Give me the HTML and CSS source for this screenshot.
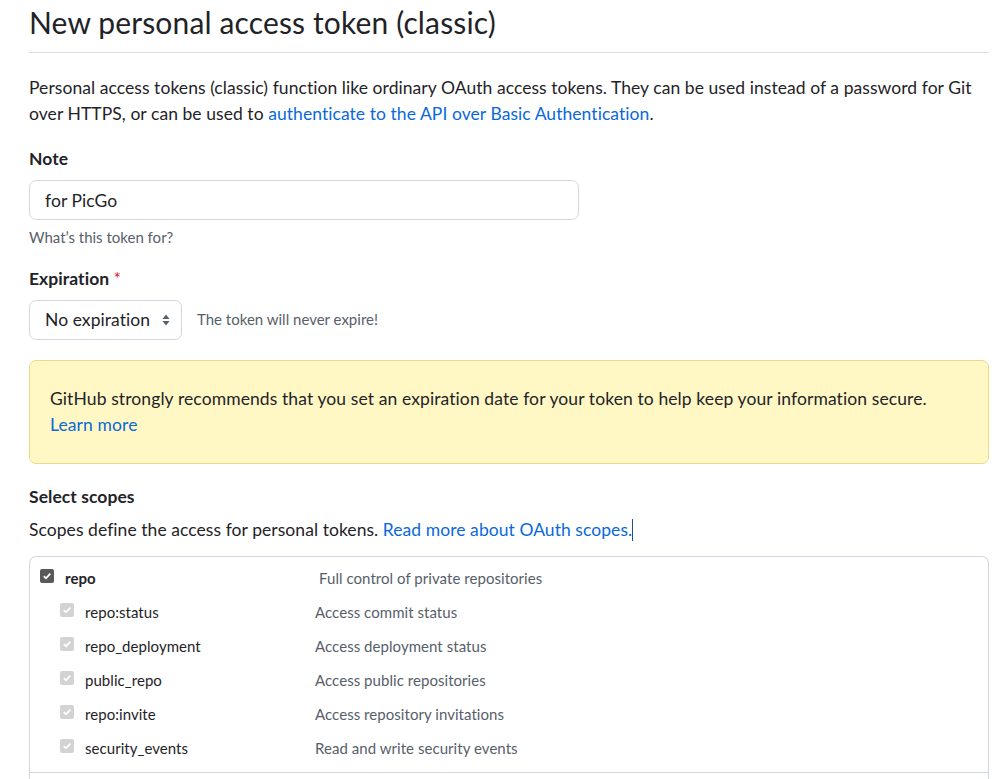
FILE: index.html
```html
<!DOCTYPE html>
<html>
<head>
<meta charset="utf-8">
<link rel="stylesheet" href="styles.css">
</head>
<body>
<div class="page">
  <h2 class="subhead">New personal access token (classic)</h2>
  <p class="intro">Personal access tokens (classic) function like ordinary OAuth access tokens. They can be used instead of a password for Git over HTTPS, or can be used to <a href="#">authenticate to the API over Basic Authentication</a>.</p>

  <div class="field">
    <label class="label">Note</label>
    <div class="input">for PicGo</div>
    <p class="note">What’s this token for?</p>
  </div>

  <div class="field">
    <label class="label">Expiration <span class="req">*</span></label>
    <div class="select-row">
      <div class="select">No expiration
        <svg class="arrows" width="8" height="12" viewBox="0 0 8 12"><path d="M4 0.5 L7.5 5 H0.5 Z M4 11.5 L0.5 7 H7.5 Z" fill="#57606a"/></svg>
      </div>
      <span class="expire-note">The token will never expire!</span>
    </div>
  </div>

  <div class="flash">GitHub strongly recommends that you set an expiration date for your token to help keep your information secure.<br><a href="#">Learn more</a></div>

  <h3 class="label scopes-title">Select scopes</h3>
  <p class="scopes-desc">Scopes define the access for personal tokens. <a href="#">Read more about OAuth scopes.</a><span class="caret"></span></p>

  <div class="scope-box">
    <div class="scope main">
      <span class="cb dark"><svg width="10" height="10" viewBox="0 0 10 10"><path d="M1.8 5.2 L4 7.3 L8.3 2.6" stroke="#fff" stroke-width="1.8" fill="none"/></svg></span>
      <span class="scope-name">repo</span>
      <span class="scope-desc">Full control of private repositories</span>
    </div>
    <div class="scope sub">
      <span class="cb light"><svg width="10" height="10" viewBox="0 0 10 10"><path d="M1.8 5.2 L4 7.3 L8.3 2.6" stroke="#fff" stroke-width="1.8" fill="none"/></svg></span>
      <span class="scope-name">repo:status</span>
      <span class="scope-desc">Access commit status</span>
    </div>
    <div class="scope sub">
      <span class="cb light"><svg width="10" height="10" viewBox="0 0 10 10"><path d="M1.8 5.2 L4 7.3 L8.3 2.6" stroke="#fff" stroke-width="1.8" fill="none"/></svg></span>
      <span class="scope-name">repo_deployment</span>
      <span class="scope-desc">Access deployment status</span>
    </div>
    <div class="scope sub">
      <span class="cb light"><svg width="10" height="10" viewBox="0 0 10 10"><path d="M1.8 5.2 L4 7.3 L8.3 2.6" stroke="#fff" stroke-width="1.8" fill="none"/></svg></span>
      <span class="scope-name">public_repo</span>
      <span class="scope-desc">Access public repositories</span>
    </div>
    <div class="scope sub">
      <span class="cb light"><svg width="10" height="10" viewBox="0 0 10 10"><path d="M1.8 5.2 L4 7.3 L8.3 2.6" stroke="#fff" stroke-width="1.8" fill="none"/></svg></span>
      <span class="scope-name">repo:invite</span>
      <span class="scope-desc">Access repository invitations</span>
    </div>
    <div class="scope sub">
      <span class="cb light"><svg width="10" height="10" viewBox="0 0 10 10"><path d="M1.8 5.2 L4 7.3 L8.3 2.6" stroke="#fff" stroke-width="1.8" fill="none"/></svg></span>
      <span class="scope-name">security_events</span>
      <span class="scope-desc">Read and write security events</span>
    </div>
  </div>
  <div class="scope-next"></div>
</div>
</body>
</html>
```
FILE: styles.css
```css
html, body {
  margin: 0;
  padding: 0;
  background: #ffffff;
}
body {
  font-family: Lato, "Noto Sans", sans-serif;
  color: #1f2328;
  font-size: 17.5px;
  line-height: 26px;
  letter-spacing: 0.06px;
}
a {
  color: #0969da;
  text-decoration: none;
}
.page {
  margin-left: 29px;
  width: 960px;
  overflow: hidden;
  height: 779px;
}
.subhead {
  margin: 0;
  font-size: 30px;
  font-weight: 400;
  line-height: 44px;
  padding-bottom: 8px;
  border-bottom: 1px solid #d8dee4;
  letter-spacing: 0.14px;
}
.intro {
  margin: 22px 0 0 0;
}
.field {
  margin-top: 19px;
}
.label {
  display: block;
  font-weight: 700;
  font-size: 17.5px;
  line-height: 26px;
  margin: 0;
}
.req {
  color: #cf222e;
  font-weight: 400;
}
.input {
  margin-top: 8px;
  height: 38px;
  border: 1px solid #d0d7de;
  border-radius: 7px;
  padding: 0 15px;
  box-sizing: content-box;
  width: 518px;
  line-height: 39px;
}
.note {
  margin: 7px 0 0 0;
  font-size: 15px;
  line-height: 20px;
  color: #57606a;
  letter-spacing: 0;
}
.select-row {
  margin-top: 8px;
  display: flex;
  align-items: center;
  gap: 15px;
}
.select {
  display: flex;
  align-items: center;
  justify-content: space-between;
  width: 125px;
  height: 38px;
  padding: 0 11px 0 15px;
  border: 1px solid #d0d7de;
  border-radius: 7px;
  line-height: 38px;
}
.arrows {
  display: block;
}
.expire-note {
  font-size: 15px;
  color: #57606a;
  line-height: 20px;
  padding-bottom: 2px;
  letter-spacing: 0;
}
.flash {
  margin-top: 20px;
  background: #fff8c5;
  border: 1px solid #ecd98a;
  border-radius: 7px;
  padding: 25px 20px;
  letter-spacing: 0.1px;
}
.scopes-title {
  margin-top: 20px;
}
.scopes-desc {
  margin: 7px 0 0 0;
}
.caret {
  display: inline-block;
  width: 1px;
  height: 22px;
  background: #1a4f9a;
  vertical-align: -5px;
}
.scope-box {
  margin-top: 13px;
  border: 1px solid #d0d7de;
  border-bottom: none;
  border-radius: 7px 7px 0 0;
  padding: 4px 0 7px 0;
}
.scope {
  display: flex;
  align-items: center;
  height: 34px;
  font-size: 15px;
  letter-spacing: 0.05px;
}
.scope.main {
  padding-left: 10px;
}
.scope.sub {
  padding-left: 30px;
}
.cb {
  width: 14px;
  height: 14px;
  border-radius: 2px;
  display: flex;
  align-items: center;
  justify-content: center;
  margin-right: 11px;
}
.cb.dark {
  background: #595959;
  margin-top: -4px;
}
.cb.light {
  background: #d3d3d3;
  margin-top: -4px;
}
.cb svg {
  display: block;
}
.scope-name {
  color: #1f2328;
}
.main .scope-name {
  font-weight: 700;
  width: 254px;
}
.sub .scope-name {
  width: 230px;
}
.scope-desc {
  color: #57606a;
}
.scope-next {
  border-top: 1px solid #d0d7de;
  border-left: 1px solid #d0d7de;
  border-right: 1px solid #d0d7de;
  height: 20px;
}
```
